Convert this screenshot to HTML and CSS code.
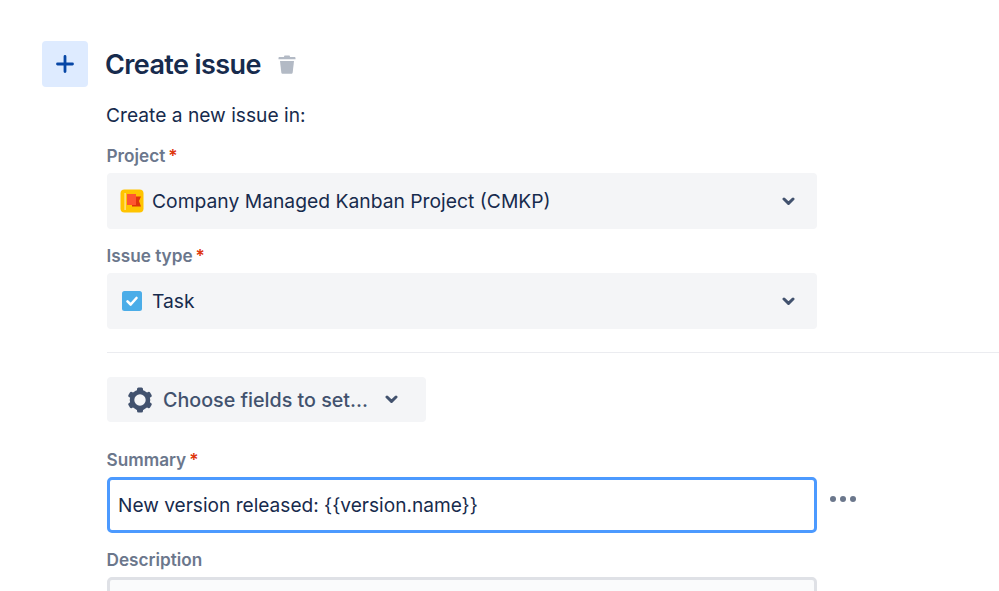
FILE: index.html
```html
<!DOCTYPE html>
<html lang="en">
<head>
<meta charset="utf-8">
<title>Create issue</title>
<link rel="stylesheet" href="styles.css">
</head>
<body>
<main class="page">
  <header class="head">
    <div class="plus-box">
      <svg width="20" height="20" viewBox="0 0 20 20"><path d="M10 2.500v15M2.500 10h15" stroke="#0747a6" stroke-width="2.800" stroke-linecap="round" fill="none"/></svg>
    </div>
    <h1 class="title">Create issue</h1>
    <svg class="trash" width="18" height="19" viewBox="0 0 18 19"><path d="M6.500 .5h5l.6 1.500h4.400c.5 0 1 .4 1 1v1.300H.5V3c0-.6.5-1 1-1h4.400z" fill="#b3bac5"/><path d="M2 6h14l-1.300 11.500c-.1.800-.7 1.300-1.500 1.300H4.800c-.8 0-1.400-.5-1.500-1.300z" fill="#b3bac5"/></svg>
  </header>
  <section class="content">
    <p class="intro">Create a new issue in:</p>
    <div class="label label-first">Project<span class="req">*</span></div>
    <div class="select">
      <svg class="ico" width="24" height="24" viewBox="0 0 24 24"><rect x=".5" y=".5" width="23" height="23" rx="4" fill="#ffc400"/><rect x="4.500" y="4" width="1.200" height="17" fill="#ffe9a8"/><path d="M12 7.500h9l-2 4.500 2 5.500h-9z" fill="#de350b"/><path d="M7 5h9v11H7z" fill="#ff5630"/></svg>
      <span class="val">Company Managed Kanban Project (CMKP)</span>
      <svg class="chev" width="13" height="9" viewBox="0 0 13 9"><path d="M2 2l4.500 4.400L11 2" stroke="#42526e" stroke-width="3" stroke-linecap="round" stroke-linejoin="round" fill="none"/></svg>
    </div>
    <div class="label">Issue type<span class="req">*</span></div>
    <div class="select">
      <svg class="ico" width="24" height="24" viewBox="0 0 24 24"><rect x="2" y="2" width="20" height="20" rx="2.500" fill="#4bade8"/><path d="M7.500 12.300l3.200 3.200 5.800-6.500" stroke="#fff" stroke-width="2.600" stroke-linecap="round" stroke-linejoin="round" fill="none"/></svg>
      <span class="val">Task</span>
      <svg class="chev" width="13" height="9" viewBox="0 0 13 9"><path d="M2 2l4.500 4.400L11 2" stroke="#42526e" stroke-width="3" stroke-linecap="round" stroke-linejoin="round" fill="none"/></svg>
    </div>
    <hr class="rule">
    <button class="fields" type="button">
      <svg width="26" height="26" viewBox="0 0 26 26"><circle cx="13" cy="13" r="8" stroke="#42526e" stroke-width="4.600" fill="none"/><g fill="#42526e"><rect x="10" y=".5" width="6" height="5" rx="1.500"/><rect x="10" y="20.500" width="6" height="5" rx="1.500"/><rect x="10" y=".5" width="6" height="5" rx="1.500" transform="rotate(60 13 13)"/><rect x="10" y="20.500" width="6" height="5" rx="1.500" transform="rotate(60 13 13)"/><rect x="10" y=".5" width="6" height="5" rx="1.500" transform="rotate(120 13 13)"/><rect x="10" y="20.500" width="6" height="5" rx="1.500" transform="rotate(120 13 13)"/></g></svg>
      <span>Choose fields to set...</span>
      <svg class="chev-btn" width="13" height="9" viewBox="0 0 13 9"><path d="M2 2l4.500 4.400L11 2" stroke="#42526e" stroke-width="3" stroke-linecap="round" stroke-linejoin="round" fill="none"/></svg>
    </button>
    <div class="label label-summary">Summary<span class="req">*</span></div>
    <div class="summary-row">
      <div class="input">New version released: {{version.name}}</div>
      <div class="dots"><i></i><i></i><i></i></div>
    </div>
    <div class="label label-desc">Description</div>
    <div class="desc"></div>
  </section>
</main>
</body>
</html>
```

FILE: styles.css
```css
* { box-sizing: border-box; }
html, body { margin: 0; height: 591px; overflow: hidden; background: #fff; }
body { font-family: Inter, "Liberation Sans", sans-serif; color: #172b4d; }
.page { height: 591px; overflow: hidden; padding: 41px 0 0 42px; }
.head { display: flex; align-items: center; height: 46px; }
.plus-box { width: 46px; height: 46px; border-radius: 4px; background: #deebff; display: flex; align-items: center; justify-content: center; }
.title { margin: 2px 0 0 17px; font-size: 27px; font-weight: 600; line-height: 46px; letter-spacing: -0.6px; }
.trash { margin-left: 17px; }
.content { margin-left: 65px; width: 892px; }
.intro { margin: 16px 0 0 -1px; font-size: 19.2px; line-height: 24px; }
.label { font-size: 17.2px; font-weight: 600; color: #6b778c; line-height: 20px; height: 20px; margin-left: -0.5px; }
.label-first { margin-top: 19px; }
.req { color: #de350b; margin-left: 3px; }
.select { width: 710px; height: 56px; margin-top: 7px; background: #f4f5f7; border-radius: 4px; display: flex; align-items: center; padding: 0 22px 0 13px; }
.label + .select + .label { margin-top: 17px; }
.ico { flex: none; }
.val { margin-left: 8px; font-size: 19.3px; flex: 1; }
.chev { flex: none; }
.rule { border: 0; border-top: 1px solid #ebecf0; margin: 23px 0 0; }
.fields { margin-top: 24px; width: 319px; height: 45px; border: 0; border-radius: 4px; background: #f4f5f7; display: flex; align-items: center; padding: 0 0 0 20px; color: #42526e; font: 500 19.700px Inter, sans-serif; }
.fields span { margin-left: 10px; }
.chev-btn { margin-left: 17px; }
.label-summary { margin-top: 28px; }
.summary-row { display: flex; align-items: center; margin-top: 7px; }
.input { width: 710px; height: 56px; border: 3px solid #4c9aff; border-radius: 5px; padding: 0 8px; font-size: 19.1px; line-height: 50px; }
.dots { display: flex; gap: 4px; margin: -12px 0 0 13px; }
.dots i { width: 6px; height: 6px; border-radius: 50%; background: #6b778c; }
.label-desc { margin-top: 17px; }
.desc { width: 710px; height: 60px; margin-top: 7px; border: 3px solid #dfe1e6; border-radius: 5px; background: #fafbfc; }
```
